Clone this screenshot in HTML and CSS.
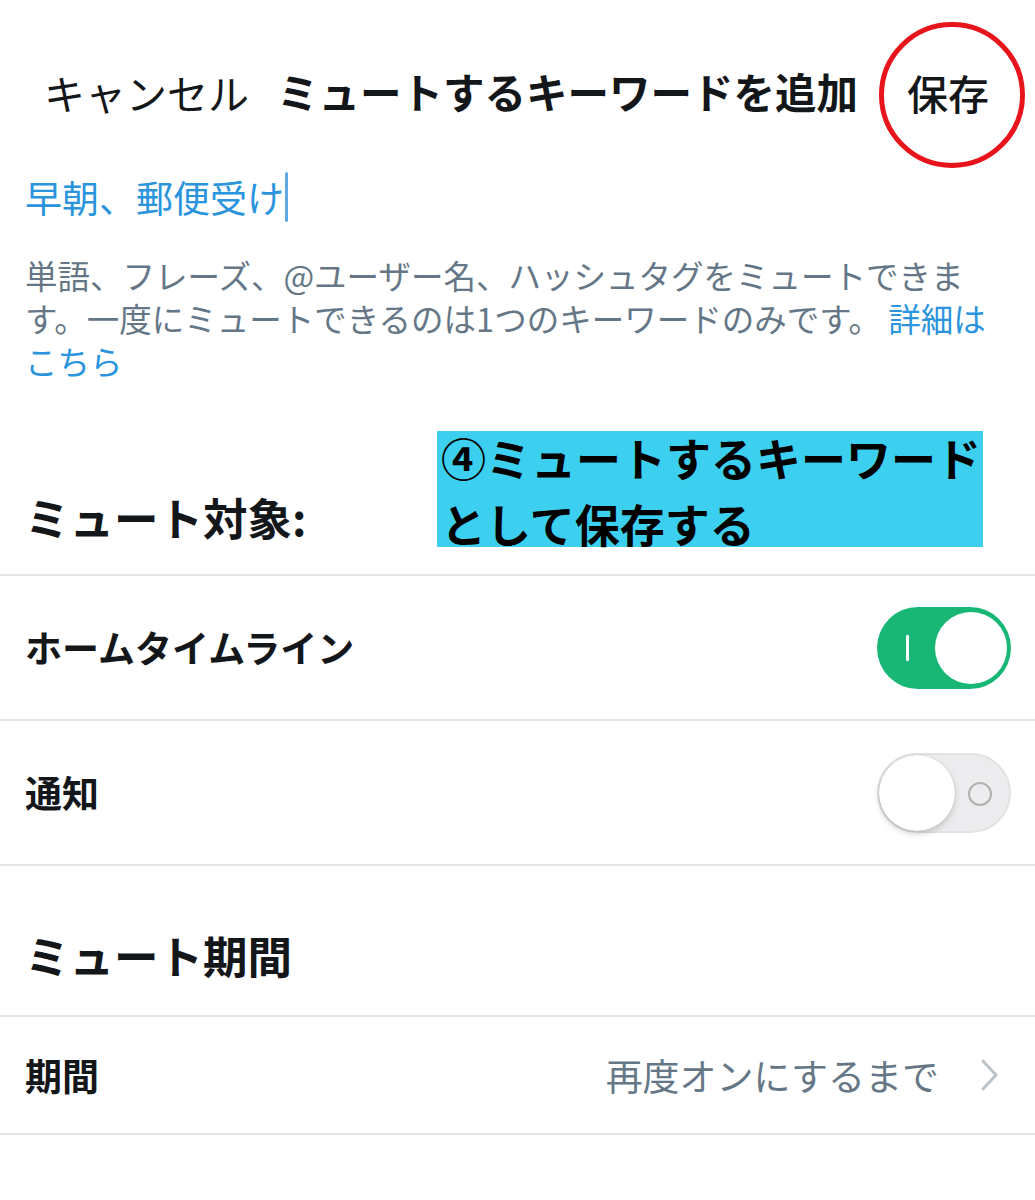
FILE: index.html
```html
<!DOCTYPE html>
<html lang="ja">
<head>
<meta charset="utf-8">
<title>ミュートするキーワードを追加</title>
<link rel="stylesheet" href="styles.css">
</head>
<body>
<div class="page">
  <header class="nav">
    <span class="nav-cancel">キャンセル</span>
    <span class="nav-title">ミュートするキーワードを追加</span>
    <span class="nav-save">保存</span>
  </header>

  <div class="keyword">早朝、郵便受け<span class="caret"></span></div>

  <p class="desc">単語、フレーズ、@ユーザー名、ハッシュタグをミュートできます。一度にミュートできるのは1つのキーワードのみです。 <span class="link">詳細はこちら</span></p>

  <div class="section-head first">
    <h2 class="section-title">ミュート対象:</h2>
    <div class="callout">④ミュートするキーワード<br>として保存する</div>
  </div>

  <div class="row">
    <span class="row-label">ホームタイムライン</span>
    <span class="toggle on"><span class="toggle-mark"></span><span class="knob"></span></span>
  </div>
  <div class="row">
    <span class="row-label">通知</span>
    <span class="toggle off"><span class="knob"></span><span class="toggle-ring"></span></span>
  </div>

  <div class="section-head second">
    <h2 class="section-title">ミュート期間</h2>
  </div>

  <div class="row short last">
    <span class="row-label">期間</span>
    <span class="row-value">再度オンにするまで
      <svg class="chev" width="22" height="34" viewBox="0 0 22 34"><path d="M4 3 L17 17 L4 31" fill="none" stroke="#b9c3ca" stroke-width="3" stroke-linecap="round" stroke-linejoin="round"/></svg>
    </span>
  </div>
</div>
</body>
</html>
```
FILE: styles.css
```css
* { box-sizing: border-box; }
html, body { margin: 0; padding: 0; background: #fff; }
body {
  font-family: "Noto Sans CJK JP", "Noto Sans", sans-serif;
  color: #14171a;
  width: 1035px;
}
.page { width: 1035px; }

.nav {
  display: flex;
  align-items: center;
  height: 146px;
  margin-top: 22px;
  padding-left: 44px;
}
.nav-cancel {
  font-size: 41px;
  line-height: 1;
  font-weight: 400;
  color: #14171a;
  margin-top: -6px;
}
.nav-title {
  font-size: 41.5px;
  line-height: 1;
  font-weight: 700;
  margin-left: 28px;
  margin-top: -6px;
}
.nav-save {
  margin-left: 21px;
  width: 146px;
  height: 146px;
  border: 5px solid #e8141c;
  border-radius: 50%;
  display: flex;
  align-items: center;
  justify-content: center;
  padding: 0 8px 6px 0;
  font-size: 41px;
  font-weight: 500;
  line-height: 1;
}

.keyword {
  margin-top: 4px;
  padding-left: 25px;
  height: 50px;
  display: flex;
  align-items: center;
  font-size: 37px;
  line-height: 50px;
  color: #2a94dc;
}
.caret {
  display: inline-block;
  width: 3px;
  height: 50px;
  background: #5fabe8;
  border-radius: 2px;
  margin-left: 1px;
}

.desc {
  margin: 31px 0 0;
  padding: 0 45px 0 25px;
  font-size: 32.5px;
  line-height: 43px;
  color: #657786;
}
.link { color: #2a94dc; }

.section-head {
  display: flex;
  align-items: flex-end;
  padding-left: 25px;
}
.section-head.first {
  padding-top: 43px;
  padding-bottom: 17px;
}
.section-head.second {
  border-top: 2px solid #e4e4e4;
  padding-top: 59px;
  padding-bottom: 30px;
}
.section-title {
  margin: 0;
  font-size: 44.5px;
  line-height: 60px;
  font-weight: 700;
  color: #14171a;
}
.section-head.first .section-title { margin-bottom: 10px; }
.callout {
  margin-left: auto;
  margin-right: 52px;
  width: 546px;
  color: #000;
  font-size: 45px;
  font-weight: 700;
  line-height: 66px;
  padding: 0 0 0 4px;
  white-space: nowrap;
  background-image: linear-gradient(#3ccfef, #3ccfef);
  background-repeat: no-repeat;
  background-size: 100% 116px;
  background-position: 0 6px;
}

.row {
  display: flex;
  align-items: center;
  justify-content: space-between;
  height: 145px;
  border-top: 2px solid #e4e4e4;
  padding: 0 24px 0 25px;
}
.row.short { height: 118px; }
.row.last { border-bottom: 2px solid #e4e4e4; height: 120px; }
.row-label {
  font-size: 37px;
  font-weight: 700;
  line-height: 1;
  color: #14171a;
}
.row-value {
  display: flex;
  align-items: center;
  font-size: 37px;
  line-height: 1;
  color: #657786;
}
.chev { margin-left: 40px; margin-right: 10px; }

.toggle {
  position: relative;
  display: block;
  width: 134px;
  height: 82px;
  border-radius: 41px;
}
.toggle.on {
  background: #19b776;
}
.toggle.on .knob {
  position: absolute;
  right: 4px;
  top: 5px;
  width: 72px;
  height: 72px;
  border-radius: 50%;
  background: #fff;
}
.toggle-mark {
  position: absolute;
  left: 29px;
  top: 28px;
  width: 3px;
  height: 26px;
  background: #fff;
  border-radius: 1px;
}
.toggle.off {
  height: 80px;
  background: #ececee;
  border: 2px solid #e2e2e4;
}
.toggle.off .knob {
  position: absolute;
  left: 0;
  top: 0;
  width: 76px;
  height: 76px;
  border-radius: 50%;
  background: #fff;
  box-shadow: 0 3px 6px rgba(0,0,0,0.18), 0 0 1px rgba(0,0,0,0.2);
}
.toggle-ring {
  position: absolute;
  right: 17px;
  top: 27px;
  width: 24px;
  height: 24px;
  border: 2px solid #b0b0b2;
  border-radius: 50%;
}
```
